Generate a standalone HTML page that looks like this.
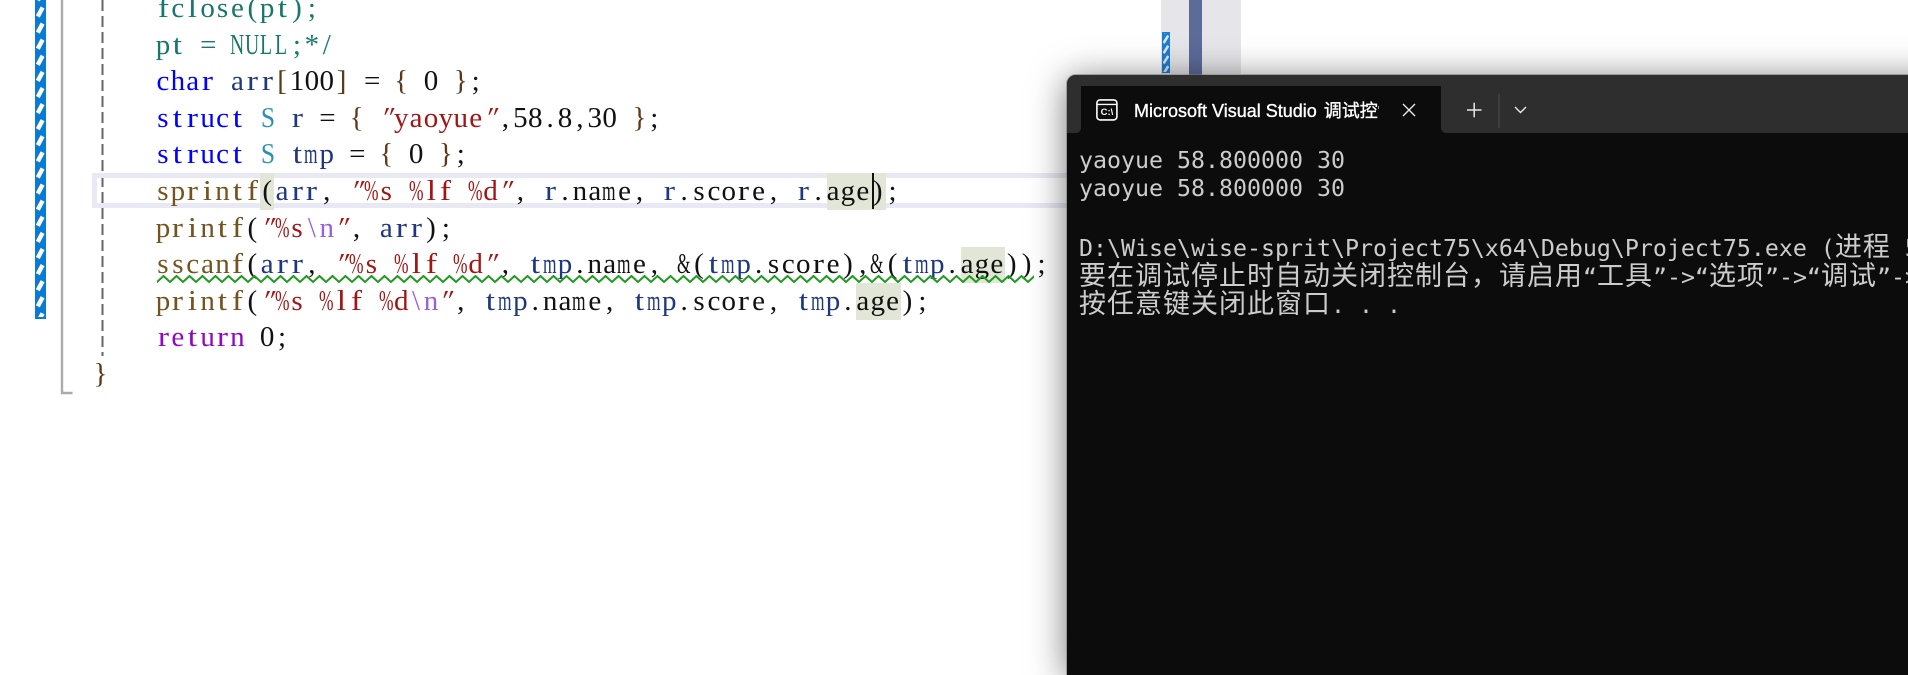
<!DOCTYPE html>
<html><head><meta charset="utf-8"><title>Code and console</title>
<style>
html,body{margin:0;padding:0;background:#fff;width:1908px;height:592px;overflow:hidden}
.a{position:absolute}
.l{position:absolute;left:155.5px;height:36.6px;line-height:36px;font-family:"Liberation Serif","Noto Serif CJK SC",serif;font-size:29px;white-space:pre;color:#111}
.l i,.l u{display:inline-block;width:14.9px;text-align:center;font-style:normal;text-decoration:none;white-space:pre}
.l u{transform:scaleX(1.15)}
.l i.w{text-align:left;transform-origin:0 0;transform:scaleX(.6)}
.l i.n{text-align:left;transform-origin:0 0;transform:scaleX(.68)}
.l i.z{transform:scaleX(.88)}
.l i.q{transform:skewX(-22deg)}
.c{color:#17776c}.k{color:#0000ff}.t{color:#2b91af}.v{color:#1f377f}.s{color:#a31515}.f{color:#74531f}.x{color:#9a5fe0}.r{color:#8f08c4}.b{color:#5a3a1a}
.hl{position:absolute;background:#e2e6d6}
#win{position:absolute;left:1067px;top:75px;width:900px;height:600px;background:#0c0c0c;border-top-left-radius:9px;box-shadow:0 0 0 1px rgba(120,120,120,.55),0 4px 36px rgba(0,0,0,.55);overflow:hidden}
.con{position:absolute;left:12px;height:28px;line-height:28px;font-family:"DejaVu Sans Mono","Liberation Mono",monospace;font-size:23.25px;color:#cccccc;white-space:pre}
.con b{font-family:"Noto Sans CJK SC",sans-serif;font-weight:400;font-size:27px;letter-spacing:1px}
</style></head><body>

<svg class="a" style="left:0;top:0" width="1300" height="400" xmlns="http://www.w3.org/2000/svg">
<defs>
<pattern id="hatch" patternUnits="userSpaceOnUse" x="35" y="4" width="11" height="16.1"><path d="M2.8 12.5 L7.6 3.5" stroke="#fff" stroke-width="4.4" fill="none"/></pattern>
<pattern id="hatch2" patternUnits="userSpaceOnUse" x="1162" y="34" width="8" height="10.2"><path d="M1.6 9 L6.2 1.5" stroke="#e4e4e4" stroke-width="2.6" fill="none"/></pattern>
<pattern id="wave" patternUnits="userSpaceOnUse" x="157" y="275" width="13" height="8"><path d="M-6.5 1 L0 7 L6.5 1 L13 7 L19.5 1" stroke="#1f9a1f" stroke-width="2" fill="none"/></pattern>
</defs>
<rect x="35" y="0" width="11" height="319" fill="#0a7bd4"/>
<rect x="36" y="0" width="9" height="317" fill="url(#hatch)"/>
<rect x="1161" y="0" width="80" height="74" fill="#e6e6ea"/>
<rect x="1189" y="0" width="13" height="75" fill="#5d6b99"/>
<rect x="1162" y="32" width="8" height="41" fill="#1a7fd8"/>
<rect x="1163" y="33" width="6" height="39" fill="url(#hatch2)"/>
<path d="M62 0 V393 H72.5" stroke="#ababab" stroke-width="2.4" fill="none"/>
<path d="M102.5 0 V356" stroke="#666" stroke-width="2" stroke-dasharray="11 5" fill="none"/>
</svg>

<div class="a" style="left:92px;top:173px;width:990px;height:35px;box-sizing:border-box;border:5px solid #e9e9f3"></div>
<div class="hl" style="left:259.6px;top:173px;width:14.9px;height:37px"></div>
<div class="hl" style="left:826.5px;top:173px;width:59.4px;height:37px"></div>
<div class="hl" style="left:960.6px;top:246.5px;width:44.8px;height:36.5px"></div>
<div class="hl" style="left:855.8px;top:283px;width:44.8px;height:36.5px"></div>

<div class="l c" style="top:-10px"><u>f</u><i>c</i><u>l</u><i>o</i><i>s</i><i>e</i><i>(</i><i>p</i><u>t</u><i>)</i><i>;</i></div>
<div class="l c" style="top:26.6px"><i>p</i><u>t</u><i> </i><i>=</i><i> </i><i class="n">N</i><i class="n">U</i><i class="n">L</i><i class="n">L</i><i>;</i><i>*</i><i>/</i></div>
<div class="l" style="top:63.2px"><span class="k"><i>c</i><i>h</i><i>a</i><u>r</u></span><i> </i><span class="v"><i>a</i><u>r</u><u>r</u></span><span class="b"><i>[</i></span><i>1</i><i>0</i><i>0</i><span class="b"><i>]</i></span><i> </i><i>=</i><i> </i><span class="b"><i>{</i></span><i> </i><i>0</i><i> </i><span class="b"><i>}</i></span><i>;</i></div>
<div class="l" style="top:99.8px"><span class="k"><i>s</i><u>t</u><u>r</u><i>u</i><i>c</i><u>t</u></span><i> </i><span class="t"><i class="z">S</i></span><i> </i><span class="v"><u>r</u></span><i> </i><i>=</i><i> </i><span class="b"><i>{</i></span><i> </i><span class="s"><i class="q">"</i><i>y</i><i>a</i><i>o</i><i>y</i><i>u</i><i>e</i><i class="q">"</i></span><i>,</i><i>5</i><i>8</i><i>.</i><i>8</i><i>,</i><i>3</i><i>0</i><i> </i><span class="b"><i>}</i></span><i>;</i></div>
<div class="l" style="top:136.4px"><span class="k"><i>s</i><u>t</u><u>r</u><i>u</i><i>c</i><u>t</u></span><i> </i><span class="t"><i class="z">S</i></span><i> </i><span class="v"><u>t</u><i class="w">m</i><i>p</i></span><i> </i><i>=</i><i> </i><span class="b"><i>{</i></span><i> </i><i>0</i><i> </i><span class="b"><i>}</i></span><i>;</i></div>
<div class="l" style="top:173px"><span class="f"><i>s</i><i>p</i><u>r</u><u>i</u><i>n</i><u>t</u><u>f</u></span><i>(</i><span class="v"><i>a</i><u>r</u><u>r</u></span><i>,</i><i> </i><span class="s"><i class="q">"</i><i class="w">%</i><i>s</i><i> </i><i class="w">%</i><u>l</u><u>f</u><i> </i><i class="w">%</i><i>d</i><i class="q">"</i></span><i>,</i><i> </i><span class="v"><u>r</u></span><i>.</i><i>n</i><i>a</i><i class="w">m</i><i>e</i><i>,</i><i> </i><span class="v"><u>r</u></span><i>.</i><i>s</i><i>c</i><i>o</i><u>r</u><i>e</i><i>,</i><i> </i><span class="v"><u>r</u></span><i>.</i><i>a</i><i>g</i><i>e</i><i>)</i><i>;</i></div>
<div class="l" style="top:209.6px"><span class="f"><i>p</i><u>r</u><u>i</u><i>n</i><u>t</u><u>f</u></span><i>(</i><span class="s"><i class="q">"</i><i class="w">%</i><i>s</i></span><span class="x"><i>\</i><i>n</i></span><span class="s"><i class="q">"</i></span><i>,</i><i> </i><span class="v"><i>a</i><u>r</u><u>r</u></span><i>)</i><i>;</i></div>
<div class="l" style="top:246.2px"><span class="f"><i>s</i><i>s</i><i>c</i><i>a</i><i>n</i><u>f</u></span><i>(</i><span class="v"><i>a</i><u>r</u><u>r</u></span><i>,</i><i> </i><span class="s"><i class="q">"</i><i class="w">%</i><i>s</i><i> </i><i class="w">%</i><u>l</u><u>f</u><i> </i><i class="w">%</i><i>d</i><i class="q">"</i></span><i>,</i><i> </i><span class="v"><u>t</u><i class="w">m</i><i>p</i></span><i>.</i><i>n</i><i>a</i><i class="w">m</i><i>e</i><i>,</i><i> </i><i class="w">&amp;</i><i>(</i><span class="v"><u>t</u><i class="w">m</i><i>p</i></span><i>.</i><i>s</i><i>c</i><i>o</i><u>r</u><i>e</i><i>)</i><i>,</i><i class="w">&amp;</i><i>(</i><span class="v"><u>t</u><i class="w">m</i><i>p</i></span><i>.</i><i>a</i><i>g</i><i>e</i><i>)</i><i>)</i><i>;</i></div>
<div class="l" style="top:282.8px"><span class="f"><i>p</i><u>r</u><u>i</u><i>n</i><u>t</u><u>f</u></span><i>(</i><span class="s"><i class="q">"</i><i class="w">%</i><i>s</i><i> </i><i class="w">%</i><u>l</u><u>f</u><i> </i><i class="w">%</i><i>d</i></span><span class="x"><i>\</i><i>n</i></span><span class="s"><i class="q">"</i></span><i>,</i><i> </i><span class="v"><u>t</u><i class="w">m</i><i>p</i></span><i>.</i><i>n</i><i>a</i><i class="w">m</i><i>e</i><i>,</i><i> </i><span class="v"><u>t</u><i class="w">m</i><i>p</i></span><i>.</i><i>s</i><i>c</i><i>o</i><u>r</u><i>e</i><i>,</i><i> </i><span class="v"><u>t</u><i class="w">m</i><i>p</i></span><i>.</i><i>a</i><i>g</i><i>e</i><i>)</i><i>;</i></div>
<div class="l" style="top:319.4px"><span class="r"><u>r</u><i>e</i><u>t</u><i>u</i><u>r</u><i>n</i></span><i> </i><i>0</i><i>;</i></div>
<div class="l b" style="top:356px;left:93px"><i>}</i></div>

<div class="a" style="left:872px;top:173px;width:2px;height:36px;background:#111"></div>

<svg class="a" style="left:0;top:270px" width="1100" height="20" xmlns="http://www.w3.org/2000/svg" viewBox="0 270 1100 20">
<rect x="157" y="275" width="877" height="8" fill="url(#wave)"/>
</svg>

<div id="win">
  <div class="a" style="left:0;top:0;width:900px;height:11px;background:#2e2e2e"></div>
  <div class="a" style="left:0;top:0;width:14px;height:58px;background:#2e2e2e;border-bottom-right-radius:5px"></div>
  <div class="a" style="left:374px;top:0;width:526px;height:58px;background:#2e2e2e;border-bottom-left-radius:5px"></div>
  <div class="a" style="left:14px;top:11px;width:360px;height:47px;background:#0c0c0c;border-radius:9px 9px 0 0"></div>
  <svg class="a" style="left:29px;top:24px" width="22" height="22" xmlns="http://www.w3.org/2000/svg">
    <rect x="0.9" y="0.9" width="20" height="20" rx="3.2" fill="none" stroke="#fff" stroke-width="1.6"/>
    <path d="M1 5.4 H21" stroke="#fff" stroke-width="1.4"/>
    <text x="11" y="16.2" text-anchor="middle" font-family="Liberation Sans, sans-serif" font-size="9.5" font-weight="700" fill="#fff">C:\</text>
  </svg>
  <div class="a" style="left:67px;top:24px;width:245px;height:24px;line-height:24px;overflow:hidden;white-space:nowrap;font-family:'Liberation Sans','Noto Sans CJK SC',sans-serif;font-size:18px;color:#fff;-webkit-text-stroke:.35px #fff">Microsoft Visual Studio <span style="font-size:18px;margin-left:2px">调试控制台</span></div>
  <svg class="a" style="left:330px;top:19px" width="210" height="36" xmlns="http://www.w3.org/2000/svg">
    <path d="M6 10 L18 22 M18 10 L6 22" stroke="#e8e8e8" stroke-width="1.4" fill="none"/>
    <path d="M70 16 H84.5 M77.2 8.7 V23.3" stroke="#e8e8e8" stroke-width="1.5" fill="none"/>
    <path d="M102 -2 V34" stroke="#454545" stroke-width="1.4"/>
    <path d="M118 13 L123.5 18.5 L129 13" stroke="#e8e8e8" stroke-width="1.4" fill="none"/>
  </svg>

  <div class="con" style="top:71.6px">yaoyue 58.800000 30</div>
  <div class="con" style="top:99.6px">yaoyue 58.800000 30</div>
  <div class="con" style="top:156px">D:\Wise\wise-sprit\Project75\x64\Debug\Project75.exe (<b>进程</b> 5</div>
  <div class="con" style="top:185px"><b>要在调试停止时自动关闭控制台，请启用</b>“<b>工具</b>”-&gt;“<b>选项</b>”-&gt;“<b>调试</b>”-&gt;“</div>
  <div class="con" style="top:213px"><b>按任意键关闭此窗口</b>. . .</div>
</div>
</body></html>
